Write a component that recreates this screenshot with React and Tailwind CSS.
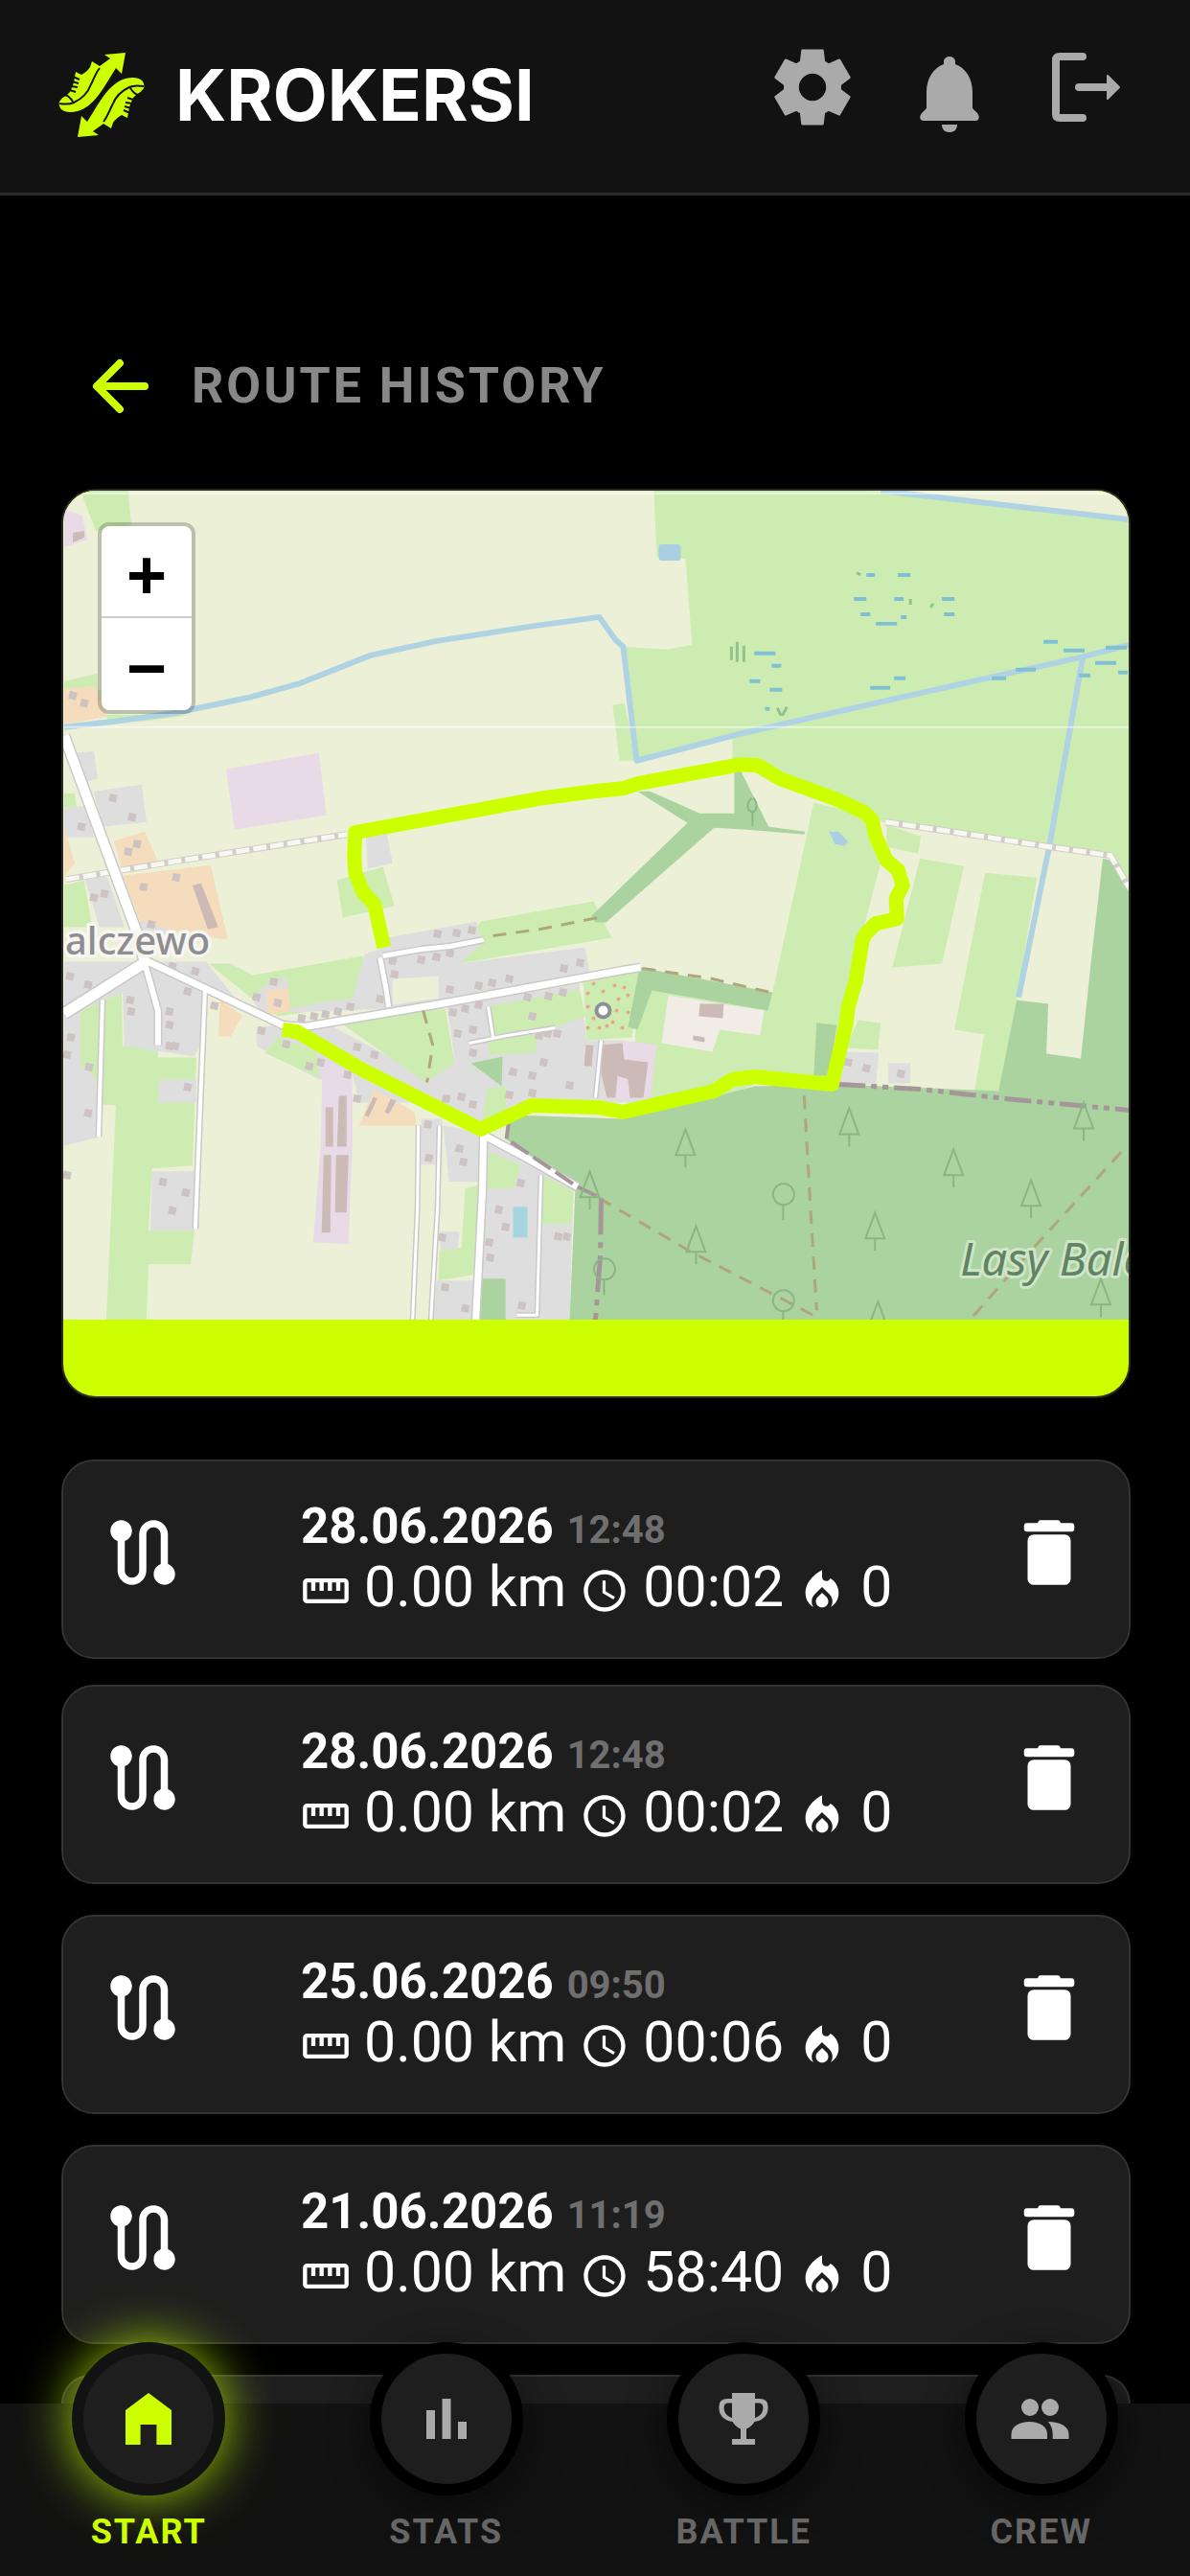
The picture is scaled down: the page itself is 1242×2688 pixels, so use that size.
import { MdLocalFireDepartment, MdRoute, MdSchedule, MdStraighten } from 'react-icons/md';

const ROUTES = [
  { id: 1, date: '28.06.2026', time: '12:48', km: '0.00 km', duration: '00:02', kcal: '0' },
  { id: 2, date: '28.06.2026', time: '12:48', km: '0.00 km', duration: '00:02', kcal: '0' },
  { id: 3, date: '25.06.2026', time: '09:50', km: '0.00 km', duration: '00:06', kcal: '0' },
  { id: 4, date: '21.06.2026', time: '11:19', km: '0.00 km', duration: '58:40', kcal: '0' },
];

/* ---------- Map data ---------- */

const GRASS = [
  '683,511 909,511 1179,542 1179,925 1163,893 1095,883 922,857 903,847 796,797 765,797 765,768 666,793 651,674 697,677 723,672 716,582 686,580',
  '640,735 652,733 666,793 647,793',
  '850,837 905,850 925,880 912,930 903,965 890,1060 870,1137 790,1130 700,1170 660,1160 664,1074 681,1012 807,1035',
  '926,860 962,872 959,890 926,883',
  '961,895 1007,903 984,1005 932,1009',
  '1029,910 1083,915 1062,1043 1043,1138 1018,1138 1028,1079 997,1074',
  '84,511 134,511 137,547 100,553',
  '67,710 102,702 102,745 200,745 150,752 112,752 108,720 67,718',
  '67,827 78,827 80,842 67,842',
  '67,923 88,918 96,967 67,967',
  '352,918 370,912 400,904 412,945 358,957',
  '502,961 620,940 639,978 479,1005',
  '218,1005 241,1005 264,1017 379,997 389,1045 290,1060 255,1035',
  '83,1054 127,1036 128,1091 165,1091 165,1103 205,1103 201,1216 159,1219 155,1284 203,1284 199,1319 155,1319 153,1377 111,1377 121,1153 107,1152 104,1180 84,1150',
];

const RESIDENTIAL = [
  '80,785 98,783 102,812 86,815',
  '98,825 148,818 153,857 107,862',
  '67,843 90,840 98,873 67,873',
  '88,915 111,912 130,967 104,967',
  '146,960 176,950 178,975 146,975',
  '67,1003 215,1003 245,1040 217,1035 214,1081 203,1102 130,1091 128,1036 67,1060',
  '67,1060 84,1050 84,1110 104,1130 104,1186 67,1195',
  '167,1126 205,1126 205,1150 165,1150',
  '159,1222 203,1222 203,1284 157,1284',
  '382,870 404,868 410,900 384,906',
  '381,995 402,988 405,978 498,961 503,985 479,1005 611,988 616,1014 410,1052 303,1056 303,1047 368,1042',
  '262,1040 285,1022 300,1020 302,1034 275,1060',
  '268,1071 341,1067 406,1102 448,1129 452,1112 475,1105 467,1050 605,1026 613,1085 650,1085 685,1090 680,1150 555,1150 505,1175 437,1150 375,1150 368,1119 333,1126 268,1091',
  '440,1167 462,1167 462,1215 440,1215',
  '463,1174 502,1181 500,1233 469,1233',
  '456,1336 498,1336 498,1377 452,1377',
  '460,1285 480,1285 478,1305 460,1305',
  '509,1188 599,1240 595,1377 497,1377',
  '884,1097 918,1098 915,1131 876,1129',
  '928,1109 951,1109 951,1130 928,1130',
];

// Lawns that sit inside the built-up areas
const GARDENS = [
  '290,1082 330,1096 333,1124 276,1098',
  '356,1067 442,1054 465,1052 475,1109 444,1129 406,1102',
  '303,1020 372,1006 366,1040 302,1052',
  '509,1050 605,1032 612,1060 560,1078 560,1098 511,1100',
  '609,1020 668,1012 660,1082 613,1085',
  '509,1135 530,1133 528,1160 503,1170',
  '486,1240 502,1236 500,1329 458,1336 459,1305 482,1302',
  '511,1202 544,1215 536,1240 507,1240',
  '567,1226 599,1243 597,1277 565,1277',
  '896,1064 920,1067 917,1095 884,1093',
];

const FARMYARD = [
  '67,718 100,715 112,747 67,755',
  '67,862 78,900 67,914',
  '119,877 151,867 165,898 128,907',
  '128,913 220,902 238,980 188,973 146,960',
  '278,1033 301,1030 304,1054 280,1059',
  '230,1043 253,1059 241,1081 228,1081',
  '391,1136 433,1160 435,1174 375,1174',
];

const INDUSTRIAL = [
  '67,530 86,537 91,562 67,570',
  '236,802 333,785 341,850 245,865',
  '337,1105 368,1119 368,1198 364,1298 327,1296 335,1195',
  '650,1086 686,1090 678,1146 640,1146',
];

const FOREST = [
  '666,825 679,825 731,848 767,848 767,802 773,802 803,862 841,867 840,870 781,865 746,863 633,962 622,962 618,955 718,858',
  '668,1009 807,1035 802,1054 681,1033 666,1074 656,1071',
  '1152,895 1160,897 1179,930 1179,1160 1043,1138 1062,1043 1095,1047 1093,1099 1129,1104 1140,1000',
  '536,1163 651,1167 762,1140 788,1133 876,1131 1043,1138 1179,1156 1179,1377 595,1377 601,1238 528,1188',
  '853,1067 874,1069 866,1122 850,1122',
  '492,1109 525,1102 524,1133',
  '503,1334 528,1334 528,1377 501,1377',
];

const BUILDINGS = [
  '201,923 210,921 228,967 217,969',
  '340,1155 348,1155 348,1196 340,1196',
  '354,1143 362,1143 362,1196 352,1196',
  '338,1205 346,1205 345,1286 336,1286',
  '351,1205 364,1205 362,1265 350,1265',
  '731,1047 756,1047 755,1062 730,1060',
  '628,1090 650,1088 652,1105 677,1108 672,1145 658,1145 656,1126 645,1122 643,1145 634,1145 628,1120',
  '612,1090 620,1090 618,1112 610,1112',
  '724,1080 736,1082 736,1087 724,1085',
  '76,555 88,553 88,560 76,565',
  '390,1144 394,1146 385,1165 381,1163',
  '408,1146 414,1148 406,1162 402,1160',
];

// Centre points of single houses
const HOUSES = [
  [76, 725], [88, 733], [118, 832], [138, 852], [85, 862], [143, 880], [134, 888], [150, 925], [184, 915],
  [109, 932], [98, 936], [158, 964], [73, 1018], [92, 1027], [180, 1008], [204, 1013], [196, 1034],
  [136, 1043], [137, 1055], [177, 1055], [177, 1069], [177, 1091], [183, 1091], [224, 1049], [74, 1082],
  [70, 1100], [93, 1113], [92, 1161], [70, 1226], [196, 1134], [170, 1233], [194, 1244], [180, 1263],
  [268, 1040], [286, 1024], [290, 1046], [315, 1062], [328, 1060], [340, 1058], [353, 1055], [366, 1050],
  [299, 1089], [273, 1075], [323, 1112], [335, 1108], [363, 1121], [373, 1092], [391, 1100], [373, 1146],
  [457, 974], [477, 973], [493, 970], [440, 1001], [456, 998], [470, 994], [410, 1002], [412, 1016],
  [397, 1042], [470, 1032], [500, 1028], [514, 1025], [532, 1021], [589, 1010], [606, 1004], [473, 1056],
  [486, 1052], [500, 1048], [551, 1040], [573, 1039], [588, 1035], [478, 1078], [494, 1074], [494, 1098],
  [556, 1060], [563, 1080], [572, 1078], [582, 1078], [536, 1118], [568, 1108], [556, 1122], [595, 1132],
  [556, 1140], [532, 1142], [482, 1144], [494, 1152], [466, 1146], [447, 1173], [448, 1208], [480, 1198],
  [484, 1212], [544, 1234], [521, 1262], [528, 1280], [462, 1291], [511, 1296], [512, 1312], [583, 1290],
  [465, 1343], [486, 1365], [545, 1362], [886, 1108], [905, 1114], [941, 1120], [592, 1290],
];

const TRACKS = ['69,917 190,897 362,870', '925,857 1000,868 1096,883 1160,892 1179,925'];

const ROADS = [
  { w: 10, pts: '67,767 142,970 151,1004' },
  { w: 11, pts: '67,1057 151,1004' },
  { w: 7, pts: '153,1002 295,1069 318,1071 460,1047 650,1012 669,1009' },
  { w: 6, pts: '151,1004 165,1054 165,1090' },
  { w: 5, pts: '400,997 440,990 470,987 505,980' },
  { w: 5, pts: '397,999 403,1030 406,1050' },
  { w: 7, pts: '505,1184 504,1240 497,1377' },
  { w: 7, pts: '505,1184 550,1208 603,1238' },
  { w: 4, pts: '107,1043 103,1186' },
  { w: 4, pts: '214,1034 208,1180 204,1282' },
  { w: 3, pts: '437,1174 436,1260 431,1377' },
  { w: 3, pts: '459,1174 457,1260 450,1377' },
  { w: 3, pts: '565,1226 561,1372 540,1372' },
  { w: 3, pts: '490,1088 530,1080 580,1072' },
  { w: 3, pts: '510,1050 515,1082' },
  { w: 3, pts: '628,1085 622,1145' },
];

const STREAMS = [
  '67,758 120,752 184,743 260,727 314,712 387,683 456,668 560,652 626,643 643,667 651,674 665,793 773,765 918,732 1129,685 1179,672',
  '1131,685 1096,883 1064,1040',
  '920,511 1179,541',
];

const WETLAND = [
  [905, 599, 9], [938, 599, 13], [892, 624, 13], [934, 624, 10], [984, 624, 13], [899, 640, 10], [986, 640, 11],
  [915, 650, 22], [941, 643, 6], [788, 681, 22], [806, 694, 10], [783, 710, 11], [804, 719, 13], [1090, 669, 15],
  [1111, 678, 22], [1155, 675, 22], [1061, 698, 21], [1036, 707, 15], [934, 707, 12], [909, 717, 21],
  [1144, 691, 22], [1127, 704, 12], [1168, 701, 10], [799, 739, 5],
];

const FOOTPATHS = [
  '840,1143 846,1250 853,1367',
  '626,1250 720,1305 857,1376',
  '1171,1202 1083,1298 1014,1376',
  '515,976 570,968 624,957',
  '442,1054 452,1090 446,1129',
  '671,1010 740,1020 805,1035',
];

const CONIFERS = [
  [716, 1178], [887, 1156], [996, 1199], [1077, 1231], [914, 1265], [727, 1279], [1132, 1150], [1150, 1334],
  [917, 1358], [616, 1222],
];

const BROADLEAVES = [[818, 1246], [631, 1324], [818, 1357]];

const PLAYGROUND_DOTS = [
  [614, 1036], [620, 1026], [630, 1034], [642, 1028], [652, 1030], [656, 1038], [646, 1042], [614, 1050],
  [620, 1062], [614, 1072], [626, 1072], [634, 1070], [640, 1066], [650, 1072], [656, 1056], [644, 1054],
];

const TRACE =
  '401,988 391,943 379,930 371,910 370,893 371,868 567,832 620,825 651,822 666,817 773,797 792,798 815,812 873,833 903,847 911,855 915,873 926,897 938,907 943,923 936,937 937,958 915,963 905,973 901,980 894,1023 886,1050 884,1067 869,1131 788,1123 765,1126 746,1138 651,1160 624,1155 555,1153 502,1178 379,1116 310,1076 295,1074';

function Areas({ items, fill }) {
  return (
    <g fill={fill}>
      {items.map((points) => (
        <polygon key={points} points={points} />
      ))}
    </g>
  );
}

function MapTiles() {
  return (
    <svg
      viewBox="66 511 1113 866"
      preserveAspectRatio="xMidYMid slice"
      className="block w-full"
      role="img"
      aria-label="Route map"
    >
      <rect x="66" y="511" width="1113" height="866" fill="#ecf0d6" />
      <Areas items={GRASS} fill="#cdecb2" />
      <Areas items={RESIDENTIAL} fill="#dfdedf" />
      <Areas items={GARDENS} fill="#cdecb2" />
      <polygon points="410,1021 458,1018 458,1041 410,1048" fill="#ecf0d6" />
      <Areas items={FARMYARD} fill="#f5dcbd" />
      <Areas items={INDUSTRIAL} fill="#e9dae8" />
      <Areas items={FOREST} fill="#abd39f" />
      <polygon points="698,1038 798,1054 794,1080 752,1074 744,1097 691,1088" fill="#f1ede6" />
      <Areas items={BUILDINGS} fill="#cbbab5" />

      <g fill="#cdc3c3">
        {HOUSES.map(([x, y]) => (
          <rect key={`${x}-${y}`} x={x - 4} y={y - 4} width="8" height="8" transform={`rotate(12 ${x} ${y})`} />
        ))}
      </g>

      {/* Water */}
      <g fill="none" stroke="#b0d3e3" strokeWidth="6" strokeLinejoin="round">
        {STREAMS.map((points) => (
          <polyline key={points} points={points} />
        ))}
      </g>
      <rect x="688" y="567" width="23" height="17" rx="3" fill="#abcfe2" />
      <polygon points="866,867 876,867 886,878 882,882 872,880" fill="#abcfe2" />
      <rect x="536" y="1259" width="15" height="32" fill="#a5d5df" />
      <g stroke="#7fc0d3" strokeWidth="4">
        {WETLAND.map(([x, y, w]) => (
          <line key={`${x}-${y}`} x1={x} y1={y} x2={x + w} y2={y} />
        ))}
      </g>
      <path
        d="M764 674v14M770 669v21M777 673v17M812 738l4 8M822 737l-5 9M895 597l4 2M951 624v6M975 629l-3 4"
        stroke="#8fc38c"
        strokeWidth="3"
        fill="none"
      />

      {/* Roads and tracks */}
      {TRACKS.map((points) => (
        <g key={points} fill="none">
          <polyline points={points} stroke="#d2cdc6" strokeWidth="7" />
          <polyline points={points} stroke="#f8f8f2" strokeWidth="5" strokeDasharray="14 4" />
        </g>
      ))}
      <g fill="none" stroke="#cbc8c8" strokeLinejoin="round">
        {ROADS.map(({ w, pts }) => (
          <polyline key={pts} points={pts} strokeWidth={w + 3} />
        ))}
      </g>
      <g fill="none" stroke="#ffffff" strokeLinejoin="round">
        {ROADS.map(({ w, pts }) => (
          <polyline key={pts} points={pts} strokeWidth={w} />
        ))}
      </g>
      <g fill="none" stroke="#b0a67c" strokeWidth="3" strokeDasharray="14 10">
        {FOOTPATHS.map((points) => (
          <polyline key={points} points={points} />
        ))}
      </g>
      <g fill="none" stroke="#a5969a" strokeWidth="5">
        <polyline points="876,1131 960,1136 1060,1147 1179,1158" strokeDasharray="28 6 6 6 6 6" />
        <polyline points="532,1166 529,1188 603,1238 628,1250" strokeDasharray="22 6" strokeWidth="4" />
        <polyline points="628,1250 627,1310 622,1377" strokeDasharray="38 8 6 8" />
      </g>

      {/* Woodland symbols */}
      <g fill="none" stroke="#8bb583" strokeWidth="2">
        {CONIFERS.map(([x, y]) => (
          <path key={`${x}-${y}`} d={`M${x} ${y}l-10 27h20zm0 27v13`} />
        ))}
        {BROADLEAVES.map(([x, y]) => (
          <path key={`${x}-${y}`} d={`M${x} ${y + 11}a11 11 0 1 1 1 0zv16`} />
        ))}
        <path d="M785 832c-6 6-5 13 1 15 5-2 6-9 1-15M786 847v14" />
      </g>

      {/* Playground */}
      <g fill="#eba588">
        {PLAYGROUND_DOTS.map(([x, y]) => (
          <circle key={`${x}-${y}`} cx={x} cy={y} r="2" />
        ))}
      </g>
      <circle cx="630" cy="1054" r="7" fill="#ffffff" stroke="#8b8f96" strokeWidth="4" />

      {/* Tile seams */}
      <path d="M66 514h1113M66 758h1113" stroke="#ffffff" strokeOpacity="0.5" strokeWidth="2" />

      <g fontFamily="'Noto Sans', 'Open Sans', sans-serif" paintOrder="stroke" strokeLinejoin="round">
        <text x="68" y="995" fontSize="40" fontWeight="500" fill="#8f8d90" stroke="#f6f6f2" strokeWidth="7">
          alczewo
        </text>
        <text x="1003" y="1331" fontSize="47" fontStyle="italic" fill="#5f8562" stroke="#d0e4c8" strokeWidth="6">
          Lasy Balc
        </text>
      </g>

      <polyline points={TRACE} fill="none" stroke="#ccff00" strokeWidth="15" strokeLinejoin="round" />
    </svg>
  );
}

/* ---------- Icons ---------- */

function Shoe() {
  return (
    <>
      <path
        fill="#ccff00"
        d="M131 55 127 77l-6-6c-6 9-11 19-18 28-7 9-14 15-22 17-8 2-15 1-18-3-1-2-2-5-1-7 2-3 4-5 7-6l4-4 3-7 1-3 2-11 6 3c4-2 7-5 9-8l2-6 8 5 11-8-6-4z"
      />
      <path
        fill="none"
        stroke="#121212"
        strokeWidth="2"
        d="M62 108c6 1 11 1 15-1 9-4 15-11 18-19 3-6 5-12 9-17M68 99c4 1 6 4 8 7M76 80l7 3M75 85l7 2M74 90l7 1M73 94l6 2"
      />
    </>
  );
}

function LogoMark() {
  return (
    <svg viewBox="61 54 90 90" className="size-[90px]" aria-hidden="true">
      <Shoe />
      <g transform="rotate(180 106 99)">
        <Shoe />
      </g>
    </svg>
  );
}

function GearIcon() {
  return (
    <svg viewBox="-20 -980 1000 1000" className="size-24" fill="currentColor" stroke="currentColor" strokeWidth="24" strokeLinejoin="round">
      <path d="m370-80-16-128q-13-5-24.5-12T307-235l-119 50L78-375l103-78q-1-7-1-13.5v-27q0-6.5 1-13.5L78-585l110-190 119 50q11-8 23-15t24-12l16-128h220l16 128q13 5 24.5 12t22.5 15l119-50 110 190-103 78q1 7 1 13.5v27q0 6.5-2 13.5l103 78-110 190-118-50q-11 8-23 15t-24 12L590-80H370Zm110-240q64 0 112-48t48-112q0-64-48-112t-112-48q-64 0-112 48t-48 112q0 64 48 112t112 48Z" />
    </svg>
  );
}

function BellIcon() {
  return (
    <svg viewBox="0 0 96 96" className="size-24" fill="currentColor">
      <path d="M42 24v-3a6 5 0 0 1 12 0v3c11 4 18 15 18 29v17l5 5c3 4 2 8-2 8H21c-4 0-5-4-2-8l5-5V53c0-14 7-25 18-29z" />
      <path d="M40 87h16c0 5-3 8-8 8s-8-3-8-8z" />
    </svg>
  );
}

function LogoutIcon() {
  return (
    <svg viewBox="0 0 96 96" className="size-24" fill="none" stroke="currentColor" strokeWidth="8" strokeLinecap="round">
      <path d="M44 16H20q-4 0-4 4v56q0 4 4 4h24" />
      <path d="M40 48h30" />
      <path d="m70 36 12 12-12 12z" fill="currentColor" strokeWidth="2" strokeLinejoin="round" />
    </svg>
  );
}

function BackIcon() {
  return (
    <svg viewBox="0 0 72 72" className="size-[72px]" fill="none" stroke="currentColor" strokeWidth="8" strokeLinecap="round" strokeLinejoin="round">
      <path d="M61 36H12M35 12 11 36l24 24" />
    </svg>
  );
}

function TrashIcon() {
  return (
    <svg viewBox="0 0 24 24" className="size-[90px]" fill="currentColor">
      <path d="M9.5 3h5q.5 0 .7.8h3q.8 0 .8.8v.8q0 .8-.8.8H5.8q-.8 0-.8-.8v-.8q0-.8.8-.8h3q.2-.8.7-.8z" />
      <rect x="6" y="7" width="12" height="14" rx="1.7" />
    </svg>
  );
}

function HomeIcon() {
  return (
    <svg viewBox="0 0 24 24" className="size-[72px]" fill="currentColor">
      <path d="M4 21V9l8-6 8 6v12h-5.2v-7H9.200v7z" />
    </svg>
  );
}

function StatsIcon() {
  return (
    <svg viewBox="0 0 24 24" className="size-[72px]" fill="currentColor">
      <path d="M5 9h3v10H5zM10.500 5h3v14h-3zM16 13h3v6h-3z" />
    </svg>
  );
}

function TrophyIcon() {
  return (
    <svg viewBox="0 0 24 24" className="size-[72px]" fill="currentColor">
      <path d="M8 3h8v2h1.500Q20.500 5 20.500 7.500V8.500c0 2.500-2.300 4.300-4.700 4.500-.6 1.200-1.700 2-2.800 2.500V19H16v2H8v-2h3v-3.500c-1.100-.5-2.200-1.300-2.800-2.500-2.400-.2-4.700-2-4.700-4.500V7.500Q3.500 5 6.500 5H8zM8 6.500h-1.300q-1.500 0-1.500 1.500c0 1.800 1 3.100 2.800 3.700zM16 6.500v5.200c1.800-.6 2.800-1.900 2.800-3.700q0-1.500-1.500-1.500z" />
    </svg>
  );
}

function CrewIcon() {
  return (
    <svg viewBox="0 0 24 24" className="size-[72px]" fill="currentColor">
      <circle cx="8" cy="8" r="3" />
      <circle cx="15" cy="8" r="3" />
      <path d="M1.500 19v-1.700c0-2.700 2.900-4.300 6.300-4.300s6.200 1.600 6.200 4.300V19z" />
      <path d="M14.300 13c4.200 0 7.200 1.700 7.200 4.300V19h-5.600v-1.700c0-1.700-.6-3.200-1.600-4.300z" />
    </svg>
  );
}

/* ---------- Screen parts ---------- */

function Header() {
  return (
    <header className="flex h-[204px] shrink-0 justify-between border-b-3 border-[#2a2a2a] bg-[#121212] pl-[61px] pr-[60px]">
      <a href="#start" className="flex h-[198px] items-center gap-8 text-white">
        <LogoMark />
        <span className="font-['Inter',sans-serif] text-[74px] leading-none font-bold">KROKERSI</span>
      </a>
      <div className="flex gap-[47px] pt-[43px] text-[#aaaaaa]">
        <button type="button" aria-label="Settings" className="size-24">
          <GearIcon />
        </button>
        <button type="button" aria-label="Notifications" className="size-24">
          <BellIcon />
        </button>
        <button type="button" aria-label="Log out" className="size-24">
          <LogoutIcon />
        </button>
      </div>
    </header>
  );
}

function RouteMap() {
  return (
    <section className="relative overflow-hidden rounded-[36px] border-2 border-[#2b2b24] bg-[#ccff00]">
      <MapTiles />
      <div className="h-20" />
      <div className="absolute top-[33px] left-9 flex w-[102px] flex-col overflow-hidden rounded-[12px] border-4 border-black/20 bg-white bg-clip-padding font-['Liberation_Sans',Arial,sans-serif] text-[72px] leading-none font-bold text-black">
        <button type="button" aria-label="Zoom in" className="flex h-24 items-center justify-center border-b-2 border-[#cccccc] pt-2">
          +
        </button>
        <button type="button" aria-label="Zoom out" className="flex h-24 items-center justify-center pt-2">
          −
        </button>
      </div>
    </section>
  );
}

function Stat({ icon: Icon, value }) {
  return (
    <>
      <Icon size={52} className="mt-2 shrink-0" />
      <span>{value}</span>
    </>
  );
}

function RouteCard({ route }) {
  return (
    <li className="flex h-[208px] shrink-0 items-center rounded-[34px] border-2 border-[#333333] bg-[#1e1e1e] px-[38px] text-white first:-mb-[5px]">
      <MdRoute size={90} className="mb-[14px] shrink-0" />
      <div className="mb-[2px] ml-[120px] flex-1">
        <div className="flex items-baseline gap-[14px] leading-[60px] font-bold">
          <span className="text-[51px]">{route.date}</span>
          <span className="text-[40px] leading-none text-[#6f6f6f]">{route.time}</span>
        </div>
        <div className="flex items-center gap-[14px] text-[59px] leading-[66px] whitespace-nowrap">
          <Stat icon={MdStraighten} value={route.km} />
          <Stat icon={MdSchedule} value={route.duration} />
          <Stat icon={MdLocalFireDepartment} value={route.kcal} />
        </div>
      </div>
      <button type="button" aria-label="Delete route" className="mb-[14px] shrink-0">
        <TrashIcon />
      </button>
    </li>
  );
}

function NavItem({ icon: Icon, label, active }) {
  return (
    <a
      href={`#${label.toLowerCase()}`}
      aria-current={active ? 'page' : undefined}
      className="flex flex-1 flex-col items-center pb-6"
    >
      <span
        className={
          active
            ? '-mt-16 flex size-40 items-center justify-center rounded-full border-12 border-[#121212] bg-[#1e1e1e] text-[#ccff00] shadow-[0_0_54px_rgba(204,255,0,0.8)]'
            : '-mt-16 flex size-40 items-center justify-center rounded-full border-12 border-black bg-[#1e1e1e] text-[#aaaaaa] shadow-[0_12px_40px_rgba(0,0,0,0.5)]'
        }
      >
        <Icon />
      </span>
      <span
        className={
          active
            ? 'mt-4 text-[36px] leading-[44px] font-bold tracking-[2px] text-[#ccff00]'
            : 'mt-4 text-[36px] leading-[44px] font-bold tracking-[2px] text-[#666666]'
        }
      >
        {label}
      </span>
    </a>
  );
}

export default function App() {
  return (
    <div className="flex h-screen flex-col bg-black font-['Roboto',sans-serif]">
      <Header />

      <main className="min-h-0 flex-1 overflow-y-auto pr-[62px] pl-16 [scrollbar-width:none]">
        <div className="flex items-center gap-[38px] px-[26px] pt-[163px] pb-[71px]">
          <a href="#back" aria-label="Back" className="text-[#ccff00]">
            <BackIcon />
          </a>
          <h1 className="text-[52px] leading-none font-bold tracking-[3px] text-[#888888]">ROUTE HISTORY</h1>
        </div>

        <RouteMap />

        <ul className="mt-16 flex flex-col gap-8">
          {ROUTES.map((route) => (
            <RouteCard key={route.id} route={route} />
          ))}
          {/* Top edge of the next card, peeking out above the nav */}
          <li aria-hidden="true" className="h-[30px] rounded-t-[34px] border-2 border-b-0 border-[#333333] bg-[#1e1e1e]" />
        </ul>
      </main>

      <nav className="relative flex shrink-0 bg-[#121212]">
        <NavItem icon={HomeIcon} label="START" active />
        <NavItem icon={StatsIcon} label="STATS" />
        <NavItem icon={TrophyIcon} label="BATTLE" />
        <NavItem icon={CrewIcon} label="CREW" />
      </nav>
    </div>
  );
}
